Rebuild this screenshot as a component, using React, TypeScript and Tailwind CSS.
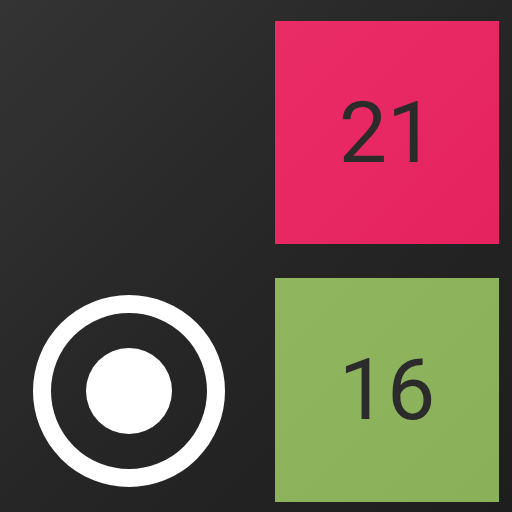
export default function App() {
  return (
    <div className="flex h-[512px] w-[512px] overflow-hidden bg-gradient-to-br from-[#343434] via-[#262626] to-[#1e1e1e] font-['Roboto','Liberation_Sans',Arial,sans-serif]">
      <div className="flex w-[275px] shrink-0 items-end pb-[25px] pl-[33px]">
        <div className="flex h-[192px] w-[192px] items-center justify-center rounded-full border-[18px] border-white">
          <div className="h-[86px] w-[86px] rounded-full bg-white" />
        </div>
      </div>
      <div className="flex flex-col gap-[34px] pt-[21px]">
        <div className="flex h-[223px] w-[224px] items-center justify-center bg-gradient-to-br from-[#ea2c66] to-[#e5235e] text-[86px] font-normal leading-none text-[#2b2b2b]">
          21
        </div>
        <div className="flex h-[224px] w-[224px] items-center justify-center bg-gradient-to-br from-[#8fb65f] to-[#8ab05a] text-[86px] font-normal leading-none text-[#2b2b2b]">
          16
        </div>
      </div>
    </div>
  )
}
